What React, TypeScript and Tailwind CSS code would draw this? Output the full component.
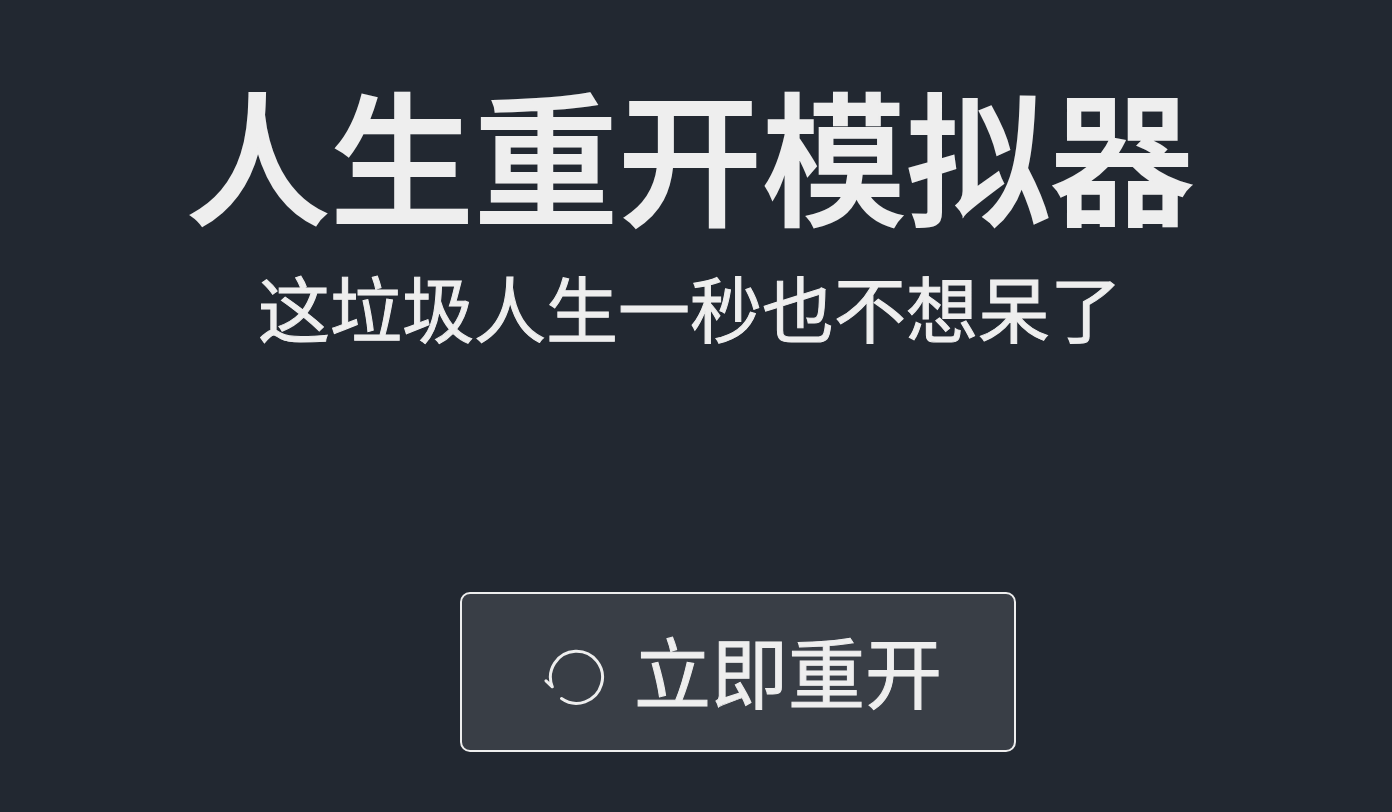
import React from "react";

function RestartIcon() {
  return (
    <svg
      viewBox="0 0 64 72"
      className="h-[72px] w-16 shrink-0"
      fill="none"
      stroke="currentColor"
      strokeWidth="3"
      strokeLinecap="round"
      strokeLinejoin="round"
      aria-hidden="true"
    >
      <path d="M19.5 65.5 A26 26 0 1 0 10.3 53.8 L4 47.8" />
    </svg>
  );
}

export default function App() {
  return (
    <main className="flex min-h-screen flex-col items-center bg-[#222831] pt-12 font-['Noto_Sans_CJK_SC',sans-serif] text-[#eeeeee]">
      <header className="pr-3 text-center whitespace-nowrap">
        <h1 className="text-[144px] leading-[208px] font-medium [-webkit-text-stroke:2px_#eeeeee]">人生重开模拟器</h1>
        <p className="text-[72px] leading-[100px] [-webkit-text-stroke:1px_#eeeeee]">这垃圾人生一秒也不想呆了</p>
      </header>
      <button
        type="button"
        className="mt-[236px] ml-[84px] flex h-[160px] w-[556px] items-center justify-center gap-7 rounded-[10px] border-2 border-[#eeeeee] bg-[#393e46] pb-1.5 pl-2 text-[77px] leading-none [-webkit-text-stroke:1px_#eeeeee]"
      >
        <RestartIcon />
        <span>立即重开</span>
      </button>
    </main>
  );
}
